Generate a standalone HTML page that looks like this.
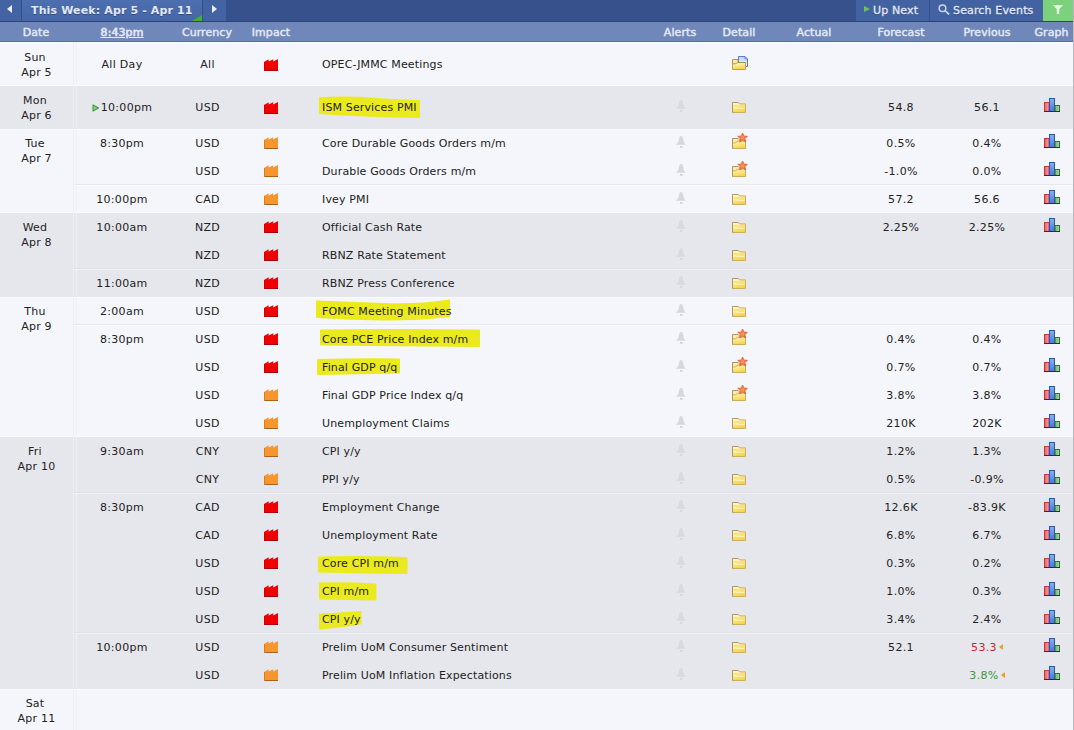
<!DOCTYPE html>
<html lang="en"><head><meta charset="utf-8"><title>Calendar</title>
<style>
html,body{margin:0;padding:0;background:#f4f6fb;}
body{width:1074px;height:730px;overflow:hidden;font-family:"DejaVu Sans","Liberation Sans",sans-serif;font-size:11px;color:#222;}
#wrap{position:relative;width:1074px;height:730px;overflow:hidden;background:#f4f6fb;}
.defs{position:absolute;width:0;height:0;overflow:hidden;}
/* top bar */
.topbar{position:absolute;left:0;top:0;width:1073px;height:21px;background:#36518c;border-bottom:1px solid #2c4479;z-index:3;}
.tb{position:absolute;top:0;height:21px;line-height:22px;letter-spacing:.15px;color:#e3e9f6;font-size:11px;white-space:nowrap;text-shadow:0 1px 0 rgba(30,50,100,.55);}
.tb.prev{left:0;width:21px;background:#4463a3;border-right:1px solid #33508d;}
.tb.title{left:22px;width:180px;background:linear-gradient(#4d6eaf,#4666a7);border-right:1px solid #33508d;font-weight:bold;text-indent:9px;letter-spacing:.14px;}
.tb.next{left:203px;width:23px;background:#4463a3;}
.tb.upnext{-webkit-text-stroke:.3px #e3e9f6;left:856px;width:73px;background:#4262a2;border-right:1px solid #35528f;}
.tb.search{-webkit-text-stroke:.3px #e3e9f6;left:930px;width:113px;background:#4262a2;}
.tb.filter{left:1043px;width:30px;background:#7cd17c;}
.tri-l{position:absolute;left:7px;top:5px;width:0;height:0;border-top:4px solid transparent;border-bottom:4px solid transparent;border-right:5px solid #e8edf8;}
.tri-r{position:absolute;left:9px;top:5px;width:0;height:0;border-top:4px solid transparent;border-bottom:4px solid transparent;border-left:5px solid #e8edf8;}
.corner{position:absolute;right:0;bottom:0;width:0;height:0;border-left:10px solid transparent;border-bottom:6px solid #3fb135;}
.tri-g{position:absolute;left:8px;top:6px;width:0;height:0;border-top:3.750px solid transparent;border-bottom:3.750px solid transparent;border-left:6px solid #6cc452;}
.tb.upnext{text-indent:17px;}
.tb.filter svg{position:absolute;left:10px;top:5px;}
.tb.search .mag{position:absolute;left:8px;top:4px;}
.tb.search{text-indent:23px;}
/* table */
table.cal{position:absolute;left:0;top:22px;width:1073px;border-collapse:separate;border-spacing:0;table-layout:fixed;z-index:2;}
table.cal th{height:17px;padding:2px 0 0;letter-spacing:.08px;-webkit-text-stroke:.3px #e2e8f4;background:#6f87b9;border-bottom:1px solid #566d9f;color:#e2e8f4;font-weight:normal;font-size:11px;text-align:center;line-height:17px;text-shadow:0 0 1px rgba(230,236,248,.6);}
table.cal th u{text-decoration:underline;}
table.cal th.hdate{text-indent:-2px;}
table.cal td{height:28px;padding:0;text-align:center;vertical-align:middle;line-height:15px;white-space:nowrap;letter-spacing:.22px;box-sizing:border-box;}
tbody.g td{background:transparent;}
tbody.w td{background:transparent;}
td.date{vertical-align:top !important;padding-top:7px !important;border-right:1px solid #eceef4;text-indent:-3px;}
tr.single td{height:43px;}
tbody:first-of-type tr.single td{height:44px;}
tbody:first-of-type td.date{padding-top:8px !important;}
td.ev{text-align:left !important;padding-left:24px !important;}
tr.sep td:not(.date){box-shadow:inset 0 1px 0 #fbfcfe,0 -1px 0 #e5e7ee;}
tbody.g tr.sep td:not(.date){box-shadow:inset 0 1px 0 #f0f1f5,0 -1px 0 #dfe1e8;}
.hl{position:absolute;left:0;top:0;z-index:1;}
.gbg{position:absolute;left:0;width:1073px;background:#e6e7ed;z-index:0;}
.wl{position:absolute;left:0;width:1073px;height:1px;background:#fafbfe;z-index:0;}
.now{display:inline-block;vertical-align:middle;margin-right:1px;position:relative;top:-.5px;}
.rev.red{color:#c1272d;}
.rev.green{color:#3a9a3a;}
.revtri{display:inline-block;width:0;height:0;border-top:3.5px solid transparent;border-bottom:3.5px solid transparent;border-right:4px solid #e8a020;margin-left:2px;vertical-align:middle;position:relative;top:-1px;}
.edge{position:absolute;left:1073px;top:0;width:1px;height:730px;background:#b8bac0;z-index:5;}
.vline{position:absolute;top:42px;width:1px;height:688px;background:#eef0f6;z-index:1;}
td.fc{padding-left:2px !important;}
th.hfc{padding-left:2px !important;}
td.imp,td.al,td.det,td.gr{position:relative;}
.ic-imp,.ic-bell,.ic-det,.ic-gr{position:absolute;display:block;overflow:visible;}
.ic-imp{width:14px;height:12px;left:20px;top:8px;}
.ic-bell{width:12px;height:14px;left:21px;top:6px;}
.ic-det{width:16px;height:16px;left:26px;top:4px;}
.ic-gr{width:16px;height:14px;left:14px;top:5px;}
tr.single .ic-imp{top:16px;}
tr.single .ic-bell{top:13px;}
tr.single .ic-det{top:11px;}
tr.single .ic-gr{top:12px;}
tbody:first-of-type tr.single .ic-imp{top:17px;}
tbody:first-of-type tr.single .ic-det{top:12px;}
td.time{letter-spacing:.3px !important;}
td.cur{letter-spacing:.3px !important;}
td.fc,td.pv{letter-spacing:.35px !important;}
td.cur{padding-left:1px !important;}
tbody.g .ic-bell{opacity:.8;}
td.ev{letter-spacing:.14px !important;}

</style></head>
<body>
<svg class="defs" width="0" height="0" aria-hidden="true"><defs>
<linearGradient id="gy" x1="0" y1="0" x2=".3" y2="1"><stop offset="0" stop-color="#fffbe0"/><stop offset=".4" stop-color="#fcec9c"/><stop offset="1" stop-color="#f4d549"/></linearGradient>
<linearGradient id="gb" x1="0" y1="0" x2="0" y2="1"><stop offset="0" stop-color="#b9d4fb"/><stop offset="1" stop-color="#f2f7ff"/></linearGradient>
<radialGradient id="gs" cx=".5" cy=".55" r=".5"><stop offset="0" stop-color="#f8a35c"/><stop offset="1" stop-color="#e55a34"/></radialGradient>
<linearGradient id="gr1" x1="0" y1="0" x2="1" y2="0"><stop offset="0" stop-color="#ee5a60"/><stop offset="1" stop-color="#f9a3a3"/></linearGradient>
<linearGradient id="gr2" x1="0" y1="0" x2="0" y2="1"><stop offset="0" stop-color="#7fb4f4"/><stop offset="1" stop-color="#4a74e4"/></linearGradient>
<linearGradient id="gr3" x1="0" y1="0" x2="1" y2="0"><stop offset="0" stop-color="#6fb874"/><stop offset="1" stop-color="#a6d8a4"/></linearGradient>
<symbol id="imp-r" viewBox="0 0 14 12"><path d="M0 12V3L4.600 .3V2.500L9.200 .3V2.500L14 0V12z" fill="#f20000"/><path d="M0 11.500h14" stroke="#a80000" stroke-width="1"/><path d="M.5 3v9" stroke="#d00000" stroke-width="1"/></symbol>
<symbol id="imp-o" viewBox="0 0 14 12"><path d="M0 12V3L4.600 .3V2.500L9.200 .3V2.500L14 0V12z" fill="#f7962e"/><path d="M0 11.500h14" stroke="#b0601c" stroke-width="1"/><path d="M.5 3v9" stroke="#d87a20" stroke-width="1"/></symbol>
<symbol id="bell" viewBox="0 0 12 14"><path d="M6.200 1C4.700 1 4.200 2.500 3.800 5C3.400 7.500 2.200 8.800 .8 9.800H11C9.800 8.800 8.800 7.500 8.400 5C8 2.500 7.600 1 6.200 1z" fill="#d6d8df"/><rect x="5" y="11" width="2.500" height="1.700" fill="#cdd0d7"/></symbol>
<symbol id="det-f" viewBox="0 0 16 16"><path d="M.5 5.500H6.200L8 6.900H13.500V15.500H.5z" fill="url(#gy)" stroke="#d0ac5e" stroke-width="1"/><path d="M1.500 8.300C5 7.700 8.500 9.300 12.500 8.300V9.300C8.500 10.300 5 8.700 1.500 9.300z" fill="#f3d665" opacity=".75"/><path d="M1.500 10.600C5 9.800 8.500 12 12.500 10.400V11.600C8.500 13 5 11 1.500 11.800z" fill="#fffbe2" opacity=".7"/><path d="M.5 15.500V5.500H6" fill="none" stroke="#b09468" stroke-width="1"/></symbol>
<symbol id="det-star" viewBox="0 0 16 16"><path d="M.5 5.500H6.200L8 6.900H13.500V15.500H.5z" fill="#fbeaa2" stroke="#d0ac5e" stroke-width="1"/><path d="M.5 15.500V10L3.500 9.800L6.500 8H13.500V15.500z" fill="url(#gy)" stroke="#d0ac5e" stroke-width="1"/><path d="M.5 15.500V5.500H6" fill="none" stroke="#b09468" stroke-width="1"/><path d="M10.60 -0.30L12.01 2.96L15.55 3.29L12.88 5.64L13.66 9.11L10.60 7.30L7.54 9.11L8.32 5.64L5.65 3.29L9.19 2.96z" fill="url(#gs)" stroke="#e05a34" stroke-width=".6" stroke-linejoin="round"/></symbol>
<symbol id="det-doc" viewBox="0 0 16 16"><path d="M6.500 2.500H13L15.500 5V12.500H6.500z" fill="url(#gb)" stroke="#6075c0" stroke-width="1"/><path d="M13 2.500V5H15.500" fill="none" stroke="#6075c0" stroke-width=".8"/><path d="M.5 5.500H6V10H.5z" fill="#fbeaa4" stroke="#b09468" stroke-width="1"/><path d="M.5 15.500V10L3.500 9.800L5.800 8.500H13.500V15.500z" fill="url(#gy)" stroke="#c0a050" stroke-width="1"/><path d="M5.800 8.500H13.500" stroke="#8f9a50" stroke-width="1"/></symbol>
<symbol id="graph" viewBox="0 0 16 14"><rect x=".5" y="4.500" width="4.500" height="9" fill="url(#gr1)" stroke="#c9343e"/><rect x="5.500" y=".5" width="5" height="13" fill="url(#gr2)" stroke="#2c54b4"/><rect x="11" y="7.500" width="4.500" height="6" fill="url(#gr3)" stroke="#35703c"/><path d="M0 13.500h5" stroke="#5a1a30" stroke-width="1"/><path d="M5 13.500h6" stroke="#182a78" stroke-width="1"/><path d="M11 13.500h5" stroke="#1c3a20" stroke-width="1"/></symbol>
</defs></svg>
<div id="wrap">
<div class="gbg" style="top:86px;height:43px"></div>
<div class="gbg" style="top:213px;height:84px"></div>
<div class="gbg" style="top:437px;height:252px"></div>
<div class="wl" style="top:42px"></div><div class="wl" style="top:85px"></div><div class="wl" style="top:129px"></div><div class="wl" style="top:212px"></div><div class="wl" style="top:297px"></div><div class="wl" style="top:436px"></div><div class="wl" style="top:689px"></div>
<div class="vline" style="left:76px"></div>
<svg class="hl" width="1074" height="730" viewBox="0 0 1074 730" aria-hidden="true">
<g fill="#eaea1e" stroke="#eaea1e" stroke-width="2" stroke-linejoin="round">
<path d="M320 98Q350 97 370 98.500T419 101L419 117Q390 116.500 365 115.500T320 113z"/>
<path d="M317 301.500Q350 302.500 383 304T449 300.500L449 316Q415 320 383 319.500T317 317z"/>
<path d="M321 330.500Q400 329.500 479 330.500L479 346Q400 345 321 344.500z"/>
<path d="M318 360Q360 359 399 359.500L399 372.500Q360 373 318 374z"/>
<path d="M319 557.500Q360 556.500 406.500 558L406.500 573Q360 572.500 319 571.500z"/>
<path d="M320 583.500Q350 583 375.500 584.500L375.500 599.500Q350 599 320 598.500z"/>
<path d="M320 614.500Q340 613.500 360.500 612L360.500 623.500Q345 626 320 628.500z"/>
</g></svg>
<div class="topbar">
 <div class="tb prev"><span class="tri-l"></span></div>
 <div class="tb title">This Week: Apr 5 - Apr 11<span class="corner"></span></div>
 <div class="tb next"><span class="tri-r"></span></div>
 <div class="tb filter"><svg width="10" height="9" viewBox="0 0 10 9"><path d="M0 0h10l-3.800 4.200v4.800h-2.400v-4.800z" fill="#e6ffe2"/></svg></div>
 <div class="tb search"><svg class="mag" width="12" height="11" viewBox="0 0 12 11"><circle cx="4.500" cy="4.300" r="3.300" fill="none" stroke="#c9d4ec" stroke-width="1.500"/><path d="M7 6.700L11.200 10.500" stroke="#c9d4ec" stroke-width="1.700"/></svg>Search Events</div>
 <div class="tb upnext"><span class="tri-g"></span>Up Next</div>
</div>
<table class="cal">
<colgroup><col style="width:74px"><col style="width:96px"><col style="width:74px"><col style="width:54px"><col style="width:356px"><col style="width:52px"><col style="width:66px"><col style="width:84px"><col style="width:88px"><col style="width:86px"><col style="width:43px"></colgroup>
<thead><tr><th class="hdate">Date</th><th><u>8:43pm</u></th><th>Currency</th><th>Impact</th><th></th><th>Alerts</th><th>Detail</th><th>Actual</th><th class="hfc">Forecast</th><th>Previous</th><th>Graph</th></tr></thead>
<tbody class="w">
<tr class="single top"><td class="date" rowspan="1">Sun<br>Apr 5</td><td class="time">All Day</td><td class="cur">All</td><td class="imp"><svg class="ic-imp"><use href="#imp-r"/></svg></td><td class="ev">OPEC-JMMC Meetings</td><td class="al"></td><td class="det"><svg class="ic-det"><use href="#det-doc"/></svg></td><td class="act"></td><td class="fc"></td><td class="pv"></td><td class="gr"></td></tr>
</tbody>
<tbody class="g">
<tr class="single top"><td class="date" rowspan="1">Mon<br>Apr 6</td><td class="time"><svg class="now" width="8" height="8" viewBox="0 0 8 8"><path d="M1 .9L6.500 4L1 7.100z" fill="#8ed08c" stroke="#3e9c42" stroke-width="1.100" stroke-linejoin="round"/></svg>10:00pm</td><td class="cur">USD</td><td class="imp"><svg class="ic-imp"><use href="#imp-r"/></svg></td><td class="ev">ISM Services PMI</td><td class="al"><svg class="ic-bell"><use href="#bell"/></svg></td><td class="det"><svg class="ic-det"><use href="#det-f"/></svg></td><td class="act"></td><td class="fc">54.8</td><td class="pv">56.1</td><td class="gr"><svg class="ic-gr"><use href="#graph"/></svg></td></tr>
</tbody>
<tbody class="w">
<tr class="top"><td class="date" rowspan="3">Tue<br>Apr 7</td><td class="time">8:30pm</td><td class="cur">USD</td><td class="imp"><svg class="ic-imp"><use href="#imp-o"/></svg></td><td class="ev">Core Durable Goods Orders m/m</td><td class="al"><svg class="ic-bell"><use href="#bell"/></svg></td><td class="det"><svg class="ic-det"><use href="#det-star"/></svg></td><td class="act"></td><td class="fc">0.5%</td><td class="pv">0.4%</td><td class="gr"><svg class="ic-gr"><use href="#graph"/></svg></td></tr>
<tr class=""><td class="time"></td><td class="cur">USD</td><td class="imp"><svg class="ic-imp"><use href="#imp-o"/></svg></td><td class="ev">Durable Goods Orders m/m</td><td class="al"><svg class="ic-bell"><use href="#bell"/></svg></td><td class="det"><svg class="ic-det"><use href="#det-star"/></svg></td><td class="act"></td><td class="fc">-1.0%</td><td class="pv">0.0%</td><td class="gr"><svg class="ic-gr"><use href="#graph"/></svg></td></tr>
<tr class="sep"><td class="time">10:00pm</td><td class="cur">CAD</td><td class="imp"><svg class="ic-imp"><use href="#imp-o"/></svg></td><td class="ev">Ivey PMI</td><td class="al"><svg class="ic-bell"><use href="#bell"/></svg></td><td class="det"><svg class="ic-det"><use href="#det-f"/></svg></td><td class="act"></td><td class="fc">57.2</td><td class="pv">56.6</td><td class="gr"><svg class="ic-gr"><use href="#graph"/></svg></td></tr>
</tbody>
<tbody class="g">
<tr class="top"><td class="date" rowspan="3">Wed<br>Apr 8</td><td class="time">10:00am</td><td class="cur">NZD</td><td class="imp"><svg class="ic-imp"><use href="#imp-r"/></svg></td><td class="ev">Official Cash Rate</td><td class="al"><svg class="ic-bell"><use href="#bell"/></svg></td><td class="det"><svg class="ic-det"><use href="#det-f"/></svg></td><td class="act"></td><td class="fc">2.25%</td><td class="pv">2.25%</td><td class="gr"><svg class="ic-gr"><use href="#graph"/></svg></td></tr>
<tr class=""><td class="time"></td><td class="cur">NZD</td><td class="imp"><svg class="ic-imp"><use href="#imp-r"/></svg></td><td class="ev">RBNZ Rate Statement</td><td class="al"><svg class="ic-bell"><use href="#bell"/></svg></td><td class="det"><svg class="ic-det"><use href="#det-f"/></svg></td><td class="act"></td><td class="fc"></td><td class="pv"></td><td class="gr"></td></tr>
<tr class="sep"><td class="time">11:00am</td><td class="cur">NZD</td><td class="imp"><svg class="ic-imp"><use href="#imp-r"/></svg></td><td class="ev">RBNZ Press Conference</td><td class="al"><svg class="ic-bell"><use href="#bell"/></svg></td><td class="det"><svg class="ic-det"><use href="#det-f"/></svg></td><td class="act"></td><td class="fc"></td><td class="pv"></td><td class="gr"></td></tr>
</tbody>
<tbody class="w">
<tr class="top"><td class="date" rowspan="5">Thu<br>Apr 9</td><td class="time">2:00am</td><td class="cur">USD</td><td class="imp"><svg class="ic-imp"><use href="#imp-r"/></svg></td><td class="ev">FOMC Meeting Minutes</td><td class="al"><svg class="ic-bell"><use href="#bell"/></svg></td><td class="det"><svg class="ic-det"><use href="#det-f"/></svg></td><td class="act"></td><td class="fc"></td><td class="pv"></td><td class="gr"></td></tr>
<tr class="sep"><td class="time">8:30pm</td><td class="cur">USD</td><td class="imp"><svg class="ic-imp"><use href="#imp-r"/></svg></td><td class="ev">Core PCE Price Index m/m</td><td class="al"><svg class="ic-bell"><use href="#bell"/></svg></td><td class="det"><svg class="ic-det"><use href="#det-star"/></svg></td><td class="act"></td><td class="fc">0.4%</td><td class="pv">0.4%</td><td class="gr"><svg class="ic-gr"><use href="#graph"/></svg></td></tr>
<tr class=""><td class="time"></td><td class="cur">USD</td><td class="imp"><svg class="ic-imp"><use href="#imp-r"/></svg></td><td class="ev">Final GDP q/q</td><td class="al"><svg class="ic-bell"><use href="#bell"/></svg></td><td class="det"><svg class="ic-det"><use href="#det-star"/></svg></td><td class="act"></td><td class="fc">0.7%</td><td class="pv">0.7%</td><td class="gr"><svg class="ic-gr"><use href="#graph"/></svg></td></tr>
<tr class=""><td class="time"></td><td class="cur">USD</td><td class="imp"><svg class="ic-imp"><use href="#imp-o"/></svg></td><td class="ev">Final GDP Price Index q/q</td><td class="al"><svg class="ic-bell"><use href="#bell"/></svg></td><td class="det"><svg class="ic-det"><use href="#det-star"/></svg></td><td class="act"></td><td class="fc">3.8%</td><td class="pv">3.8%</td><td class="gr"><svg class="ic-gr"><use href="#graph"/></svg></td></tr>
<tr class=""><td class="time"></td><td class="cur">USD</td><td class="imp"><svg class="ic-imp"><use href="#imp-o"/></svg></td><td class="ev">Unemployment Claims</td><td class="al"><svg class="ic-bell"><use href="#bell"/></svg></td><td class="det"><svg class="ic-det"><use href="#det-f"/></svg></td><td class="act"></td><td class="fc">210K</td><td class="pv">202K</td><td class="gr"><svg class="ic-gr"><use href="#graph"/></svg></td></tr>
</tbody>
<tbody class="g">
<tr class="top"><td class="date" rowspan="9">Fri<br>Apr 10</td><td class="time">9:30am</td><td class="cur">CNY</td><td class="imp"><svg class="ic-imp"><use href="#imp-o"/></svg></td><td class="ev">CPI y/y</td><td class="al"><svg class="ic-bell"><use href="#bell"/></svg></td><td class="det"><svg class="ic-det"><use href="#det-f"/></svg></td><td class="act"></td><td class="fc">1.2%</td><td class="pv">1.3%</td><td class="gr"><svg class="ic-gr"><use href="#graph"/></svg></td></tr>
<tr class=""><td class="time"></td><td class="cur">CNY</td><td class="imp"><svg class="ic-imp"><use href="#imp-o"/></svg></td><td class="ev">PPI y/y</td><td class="al"><svg class="ic-bell"><use href="#bell"/></svg></td><td class="det"><svg class="ic-det"><use href="#det-f"/></svg></td><td class="act"></td><td class="fc">0.5%</td><td class="pv">-0.9%</td><td class="gr"><svg class="ic-gr"><use href="#graph"/></svg></td></tr>
<tr class="sep"><td class="time">8:30pm</td><td class="cur">CAD</td><td class="imp"><svg class="ic-imp"><use href="#imp-r"/></svg></td><td class="ev">Employment Change</td><td class="al"><svg class="ic-bell"><use href="#bell"/></svg></td><td class="det"><svg class="ic-det"><use href="#det-f"/></svg></td><td class="act"></td><td class="fc">12.6K</td><td class="pv">-83.9K</td><td class="gr"><svg class="ic-gr"><use href="#graph"/></svg></td></tr>
<tr class=""><td class="time"></td><td class="cur">CAD</td><td class="imp"><svg class="ic-imp"><use href="#imp-r"/></svg></td><td class="ev">Unemployment Rate</td><td class="al"><svg class="ic-bell"><use href="#bell"/></svg></td><td class="det"><svg class="ic-det"><use href="#det-f"/></svg></td><td class="act"></td><td class="fc">6.8%</td><td class="pv">6.7%</td><td class="gr"><svg class="ic-gr"><use href="#graph"/></svg></td></tr>
<tr class=""><td class="time"></td><td class="cur">USD</td><td class="imp"><svg class="ic-imp"><use href="#imp-r"/></svg></td><td class="ev">Core CPI m/m</td><td class="al"><svg class="ic-bell"><use href="#bell"/></svg></td><td class="det"><svg class="ic-det"><use href="#det-f"/></svg></td><td class="act"></td><td class="fc">0.3%</td><td class="pv">0.2%</td><td class="gr"><svg class="ic-gr"><use href="#graph"/></svg></td></tr>
<tr class=""><td class="time"></td><td class="cur">USD</td><td class="imp"><svg class="ic-imp"><use href="#imp-r"/></svg></td><td class="ev">CPI m/m</td><td class="al"><svg class="ic-bell"><use href="#bell"/></svg></td><td class="det"><svg class="ic-det"><use href="#det-f"/></svg></td><td class="act"></td><td class="fc">1.0%</td><td class="pv">0.3%</td><td class="gr"><svg class="ic-gr"><use href="#graph"/></svg></td></tr>
<tr class=""><td class="time"></td><td class="cur">USD</td><td class="imp"><svg class="ic-imp"><use href="#imp-r"/></svg></td><td class="ev">CPI y/y</td><td class="al"><svg class="ic-bell"><use href="#bell"/></svg></td><td class="det"><svg class="ic-det"><use href="#det-f"/></svg></td><td class="act"></td><td class="fc">3.4%</td><td class="pv">2.4%</td><td class="gr"><svg class="ic-gr"><use href="#graph"/></svg></td></tr>
<tr class="sep"><td class="time">10:00pm</td><td class="cur">USD</td><td class="imp"><svg class="ic-imp"><use href="#imp-o"/></svg></td><td class="ev">Prelim UoM Consumer Sentiment</td><td class="al"><svg class="ic-bell"><use href="#bell"/></svg></td><td class="det"><svg class="ic-det"><use href="#det-f"/></svg></td><td class="act"></td><td class="fc">52.1</td><td class="pv"><span class="rev red">53.3<i class="revtri"></i></span></td><td class="gr"><svg class="ic-gr"><use href="#graph"/></svg></td></tr>
<tr class=""><td class="time"></td><td class="cur">USD</td><td class="imp"><svg class="ic-imp"><use href="#imp-o"/></svg></td><td class="ev">Prelim UoM Inflation Expectations</td><td class="al"><svg class="ic-bell"><use href="#bell"/></svg></td><td class="det"><svg class="ic-det"><use href="#det-f"/></svg></td><td class="act"></td><td class="fc"></td><td class="pv"><span class="rev green">3.8%<i class="revtri"></i></span></td><td class="gr"><svg class="ic-gr"><use href="#graph"/></svg></td></tr>
</tbody>
<tbody class="w">
<tr class="single last"><td class="date">Sat<br>Apr 11</td><td class="first" colspan="10"></td></tr>
</tbody>
</table>
<div class="edge"></div>
</div>
</body></html>
